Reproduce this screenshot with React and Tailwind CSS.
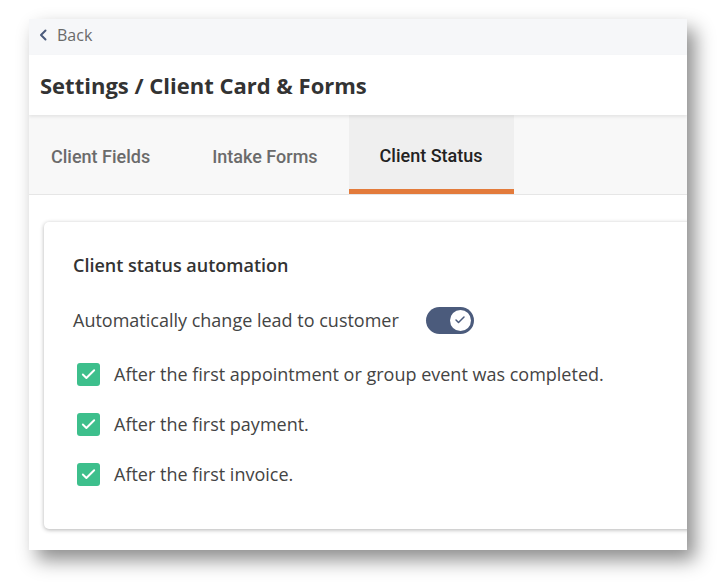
import { Check } from "lucide-react"

const tabs = ["Client Fields", "Intake Forms", "Client Status"]

const rules = [
  "After the first appointment or group event was completed.",
  "After the first payment.",
  "After the first invoice.",
]

const CheckBox = () => (
  <span className="flex h-[23px] w-[23px] shrink-0 items-center justify-center rounded-[3px] bg-[#3dbf8c]">
    <Check className="h-[17px] w-[17px] text-white" strokeWidth={2.75} />
  </span>
)

const Toggle = () => (
  <span className="flex h-[27px] w-[48px] shrink-0 items-center justify-end rounded-full bg-[#4b5b7c] pr-[3px]">
    <span className="flex h-[21px] w-[21px] items-center justify-center rounded-full bg-white">
      <Check className="h-[12px] w-[12px] text-[#4b5b7c]" strokeWidth={3} />
    </span>
  </span>
)

const App = () => {
  return (
    <div className="min-h-[587px] w-[726px] bg-white pl-[29px] pt-[19px]">
      <div
        className="flex h-[531px] w-[658px] flex-col overflow-hidden bg-white shadow-[8px_10px_18px_rgba(0,0,0,0.45)]"
        style={{ fontFamily: '"Open Sans", sans-serif' }}
      >
        <div className="flex h-[36px] shrink-0 items-center gap-[10px] bg-[#f6f7f9] pb-[5px] pl-[10px]">
          <svg width="8" height="12" viewBox="0 0 8 12" fill="none">
            <path d="M6.5 1.5 2 6l4.5 4.5" stroke="#4b5b7c" strokeWidth="2" strokeLinecap="round" strokeLinejoin="round" />
          </svg>
          <span className="text-[16px] text-[#6a6a6a]">Back</span>
        </div>

        <div className="relative z-10 flex h-[60px] shrink-0 items-center bg-white pl-[11px] pt-[1px] shadow-[0_2px_3px_rgba(0,0,0,0.08)]">
          <h1 className="text-[22px] font-bold text-[#333]">Settings / Client Card &amp; Forms</h1>
        </div>

        <div
          className="flex h-[80px] shrink-0 border-b border-[#e6e6e6] bg-[#f8f8f8]"
          style={{ fontFamily: "Roboto, sans-serif" }}
        >
          {tabs.map((tab, i) => {
            const active = tab === "Client Status"
            return (
              <div
                key={tab}
                className={
                  active
                    ? "flex items-center border-b-[5px] border-[#e37b3b] bg-[#efefef] px-[31px] pt-[7px] text-[18px] font-medium text-[#222]"
                    : i === 0
                      ? "flex items-center pl-[22px] pr-[31px] pt-[4px] text-[18px] font-medium text-[#6b6b6b]"
                      : "flex items-center px-[31px] pt-[4px] text-[18px] font-medium text-[#6b6b6b]"
                }
              >
                {tab}
              </div>
            )
          })}
        </div>

        <div className="flex-1 bg-white pl-[15px] pt-[27px]">
          <div className="h-[307px] w-[700px] rounded-[5px] bg-white pl-[29px] pt-[29px] shadow-[0_1px_4px_rgba(0,0,0,0.3)]">
            <h2 className="text-[18px] font-semibold leading-[28px] text-[#333]">Client status automation</h2>

            <div className="mt-[26px] flex h-[30px] items-center gap-[27px]">
              <span className="text-[18px] text-[#444]">Automatically change lead to customer</span>
              <Toggle />
            </div>

            <div className="mt-[24px] flex flex-col gap-[20px] pl-[4px]">
              {rules.map((rule) => (
                <label key={rule} className="flex h-[30px] items-center gap-[14px]">
                  <CheckBox />
                  <span className="text-[18px] text-[#444]">{rule}</span>
                </label>
              ))}
            </div>
          </div>
        </div>
      </div>
    </div>
  )
}

export default App
